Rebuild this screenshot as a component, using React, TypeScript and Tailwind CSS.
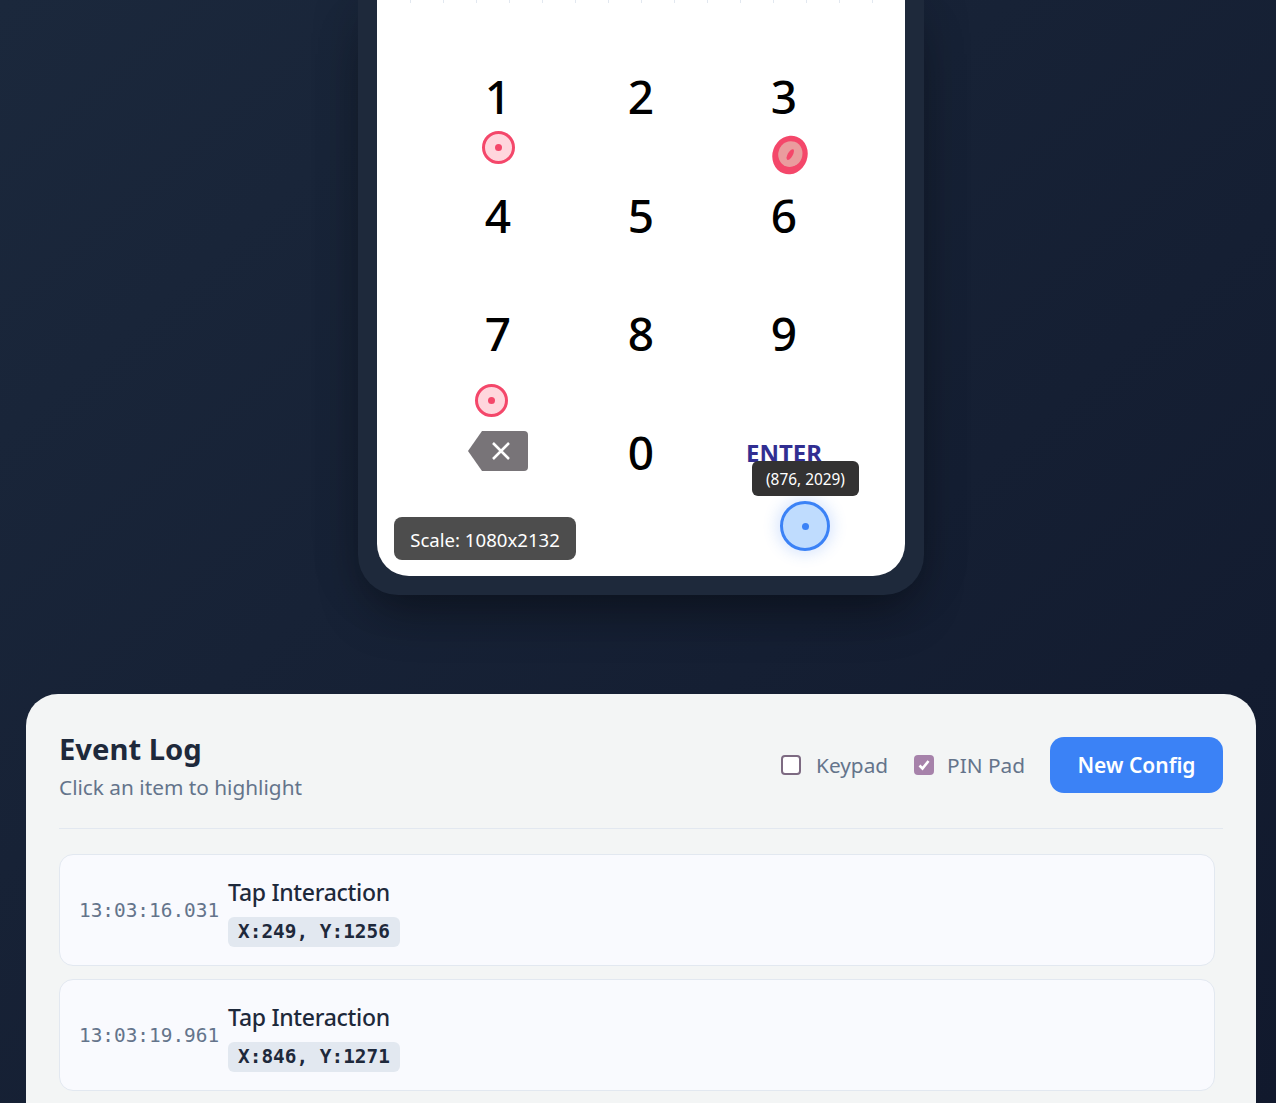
import React from "react";

const keys = ["1", "2", "3", "4", "5", "6", "7", "8", "9"];

function Marker({ cls }: { cls: string }) {
  return (
    <div className={`absolute w-[33px] h-[33px] rounded-full border-[3px] border-[#f4476a] bg-[#ffd6dd] flex items-center justify-center ${cls}`}>
      <div className="w-[7px] h-[7px] rounded-full bg-[#f4476a]" />
    </div>
  );
}

function LogItem({ time, coords }: { time: string; coords: string }) {
  return (
    <div className="h-[112px] rounded-[14px] border border-[#e2e8f0] bg-[#f9fafe] pl-[19px] flex items-center gap-[9px]">
      <span className="text-[#64748b] text-[19.4px] pt-[2px] font-['DejaVu_Sans_Mono',monospace]">{time}</span>
      <div className="flex flex-col items-start">
        <span className="text-[#1e293b] text-[23px] font-medium leading-[36px] tracking-[-0.3px]">Tap Interaction</span>
        <span className="mt-[7px] h-[30px] pt-[1px] px-[10px] flex items-center rounded-[6px] bg-[#e2e8f0] text-[#1e293b] text-[19.4px] font-semibold font-['DejaVu_Sans_Mono',monospace]">{coords}</span>
      </div>
    </div>
  );
}

export default function App() {
  return (
    <div className="h-[1103px] overflow-hidden bg-gradient-to-br from-[#1b283c] to-[#11192d] font-['Noto_Sans',sans-serif] flex flex-col items-center pl-[6px]">
      <div className="w-[566px] h-[595px] shrink-0 bg-[#1e293b] rounded-b-[40px] px-[19px] pb-[19px] shadow-[0_25px_50px_-12px_rgba(0,0,0,0.4),0_0_50px_rgba(0,0,0,0.15)]">
        <div className="relative h-full bg-white rounded-b-[32px] overflow-hidden">
          <div className="flex h-[3px] pl-[33px] gap-[32px]">
            {Array.from({ length: 15 }).map((_, i) => (
              <div key={i} className="w-px h-full bg-[#e2e8f0]" />
            ))}
          </div>
          <div className="grid grid-cols-3 grid-rows-4 w-[429px] h-[475px] mx-auto mt-[34px] text-black">
            {keys.map((k) => (
              <div key={k} className="flex items-center justify-center text-[46px] font-medium">{k}</div>
            ))}
            <div className="flex items-center justify-center pb-[4px]">
              <svg width="60" height="40" viewBox="0 0 60 40">
                <path d="M14 0H56a4 4 0 0 1 4 4V36a4 4 0 0 1-4 4H14L0 20Z" fill="#787478" />
                <path d="M25 12L41 28M41 12L25 28" stroke="#fff" strokeWidth="2.5" />
              </svg>
            </div>
            <div className="flex items-center justify-center text-[46px] font-medium">0</div>
            <div className="flex items-center justify-center text-[24px] font-bold text-[#312e91]">ENTER</div>
          </div>

          <Marker cls="left-[105px] top-[131px]" />
          <Marker cls="left-[98px] top-[384px]" />
          <svg className="absolute left-[393px] top-[135px]" width="40" height="40" viewBox="0 0 40 40">
            <ellipse cx="20" cy="20" rx="17.5" ry="19.5" transform="rotate(20 20 20)" fill="#f4476a" />
            <ellipse cx="20" cy="19" rx="12" ry="13" transform="rotate(20 20 20)" fill="#ea9c9e" />
            <ellipse cx="20" cy="19.5" rx="2.5" ry="6" transform="rotate(30 20 20)" fill="#f4476a" />
          </svg>

          <div className="absolute left-[403px] top-[501px] w-[50px] h-[50px] rounded-full border-[3px] border-[#3b82f6] bg-[#bfdcfe] flex items-center justify-center shadow-[0_0_14px_4px_rgba(59,130,246,0.18)]">
            <div className="w-[7px] h-[7px] rounded-full bg-[#3b82f6]" />
          </div>
          <div className="absolute left-[375px] top-[461px] w-[107px] h-[35px] pt-[2px] rounded-[6px] bg-[#333232] text-white text-[15.4px] flex items-center justify-center">(876, 2029)</div>
          <div className="absolute left-[17px] top-[517px] w-[182px] h-[43px] pt-[3px] rounded-[8px] bg-[#4d4d4d] text-white text-[18.6px] flex items-center justify-center">Scale: 1080x2132</div>
        </div>
      </div>

      <div className="mt-[99px] w-[1230px] shrink-0 grow rounded-t-[32px] bg-[#f3f5f5] px-[33px] pt-[33px]">
        <div className="flex items-center justify-between h-[102px] border-b border-[#e2e8f0] pb-[25px]">
          <div className="flex flex-col">
            <span className="text-[#1e293b] text-[29.2px] font-bold leading-[44px] pt-[1px]">Event Log</span>
            <span className="text-[#64748b] text-[20.8px] leading-[33px]">Click an item to highlight</span>
          </div>
          <div className="flex items-center">
            <div className="flex items-center gap-[15px] mr-[26px]">
              <div className="w-[20px] h-[20px] rounded-[4px] border-2 border-[#7d6a82] bg-white" />
              <span className="text-[#64748b] text-[20.8px] pt-[2px]">Keypad</span>
            </div>
            <div className="flex items-center gap-[13px] mr-[25px]">
              <div className="w-[20px] h-[20px] rounded-[4px] bg-[#a682aa] flex items-center justify-center">
                <svg width="14" height="14" viewBox="0 0 14 14" fill="none">
                  <path d="M2.5 7.5L5.5 10.5L11.5 3" stroke="#fff" strokeWidth="2.6" />
                </svg>
              </div>
              <span className="text-[#64748b] text-[20.8px] pt-[2px]">PIN Pad</span>
            </div>
            <button className="w-[173px] h-[56px] pt-[2px] rounded-[14px] bg-[#3b82f6] text-white text-[21px] font-semibold">New Config</button>
          </div>
        </div>
        <div className="mt-[25px] w-[1156px] flex flex-col gap-[13px]">
          <LogItem time="13:03:16.031" coords="X:249, Y:1256" />
          <LogItem time="13:03:19.961" coords="X:846, Y:1271" />
        </div>
      </div>
    </div>
  );
}
